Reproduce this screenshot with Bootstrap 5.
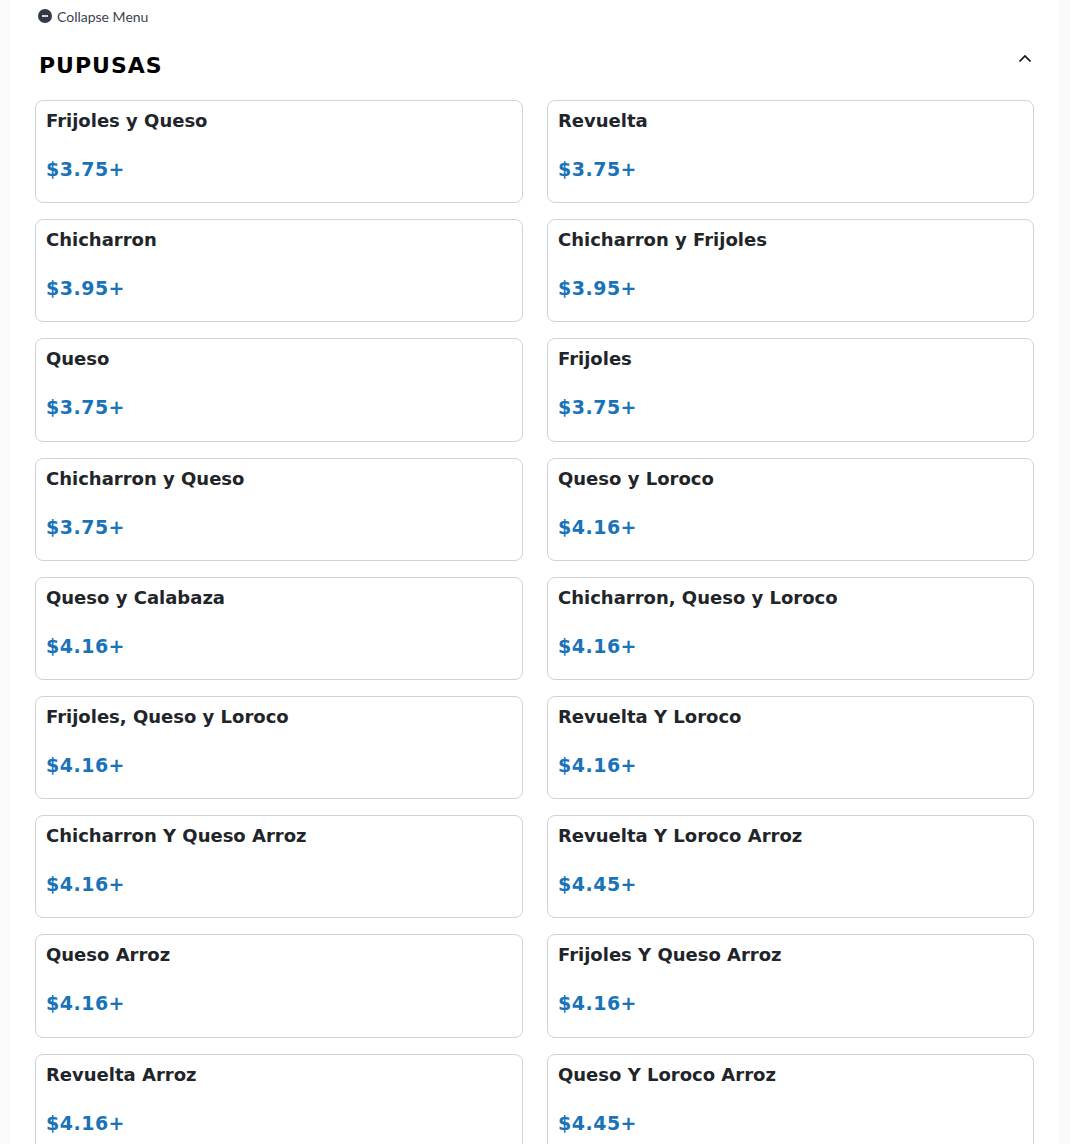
<!DOCTYPE html>
<html lang="en"><head><meta charset="utf-8"><title>Menu</title>
<link href="https://cdn.jsdelivr.net/npm/bootstrap@5.3.0/dist/css/bootstrap.min.css" rel="stylesheet">
<style>
html,body{background:#fafafa;overflow:hidden}
.sheet{background:#fff;width:1049px;margin-left:10px;height:1144px;overflow:hidden;padding:0 25px}
.collapse-link{font-family:"Lato","Noto Sans",sans-serif;font-size:14px;color:#3c4350;height:32px;padding-left:3px;gap:5px}
.sec-head{height:68px;padding-left:4px;padding-right:0}
.sec-title{font-family:"DejaVu Sans",sans-serif;font-weight:700;font-size:22px;letter-spacing:1px;color:#000;margin:0;line-height:1;padding-top:23px}
.sec-chev{margin:18px 1px 0 0}
.item-grid{display:grid;grid-template-columns:488px 487px;column-gap:24px;row-gap:16px}
.item-box{height:103.2px;border:1px solid #ced4da;border-radius:8px;padding:9px 10px 0;font-family:"DejaVu Sans",sans-serif;font-weight:700}
.item-name{font-size:18px;line-height:21px;color:#212529;margin:0}
.item-price{font-size:19px;line-height:22px;color:#1a73b8;margin-top:27px;letter-spacing:.5px}
</style></head><body>
<div class="sheet">
<div class="collapse-link d-flex align-items-center">
<svg width="14" height="14" viewBox="0 0 14 14"><circle cx="7" cy="7" r="7" fill="#343a46"/><rect x="4" y="6.2" width="6" height="1.6" fill="#fff"/></svg>
<span>Collapse Menu</span></div>
<div class="sec-head d-flex justify-content-between align-items-start">
<h2 class="sec-title">PUPUSAS</h2>
<svg class="sec-chev" width="16" height="16" viewBox="0 0 16 16"><path d="M2.5 11.5 8 6l5.500 5.500" fill="none" stroke="#111" stroke-width="1.700"/></svg>
</div>
<div class="item-grid">
<div class="item-box"><p class="item-name">Frijoles y Queso</p><div class="item-price">$3.75+</div></div>
<div class="item-box"><p class="item-name">Revuelta</p><div class="item-price">$3.75+</div></div>
<div class="item-box"><p class="item-name">Chicharron</p><div class="item-price">$3.95+</div></div>
<div class="item-box"><p class="item-name">Chicharron y Frijoles</p><div class="item-price">$3.95+</div></div>
<div class="item-box"><p class="item-name">Queso</p><div class="item-price">$3.75+</div></div>
<div class="item-box"><p class="item-name">Frijoles</p><div class="item-price">$3.75+</div></div>
<div class="item-box"><p class="item-name">Chicharron y Queso</p><div class="item-price">$3.75+</div></div>
<div class="item-box"><p class="item-name">Queso y Loroco</p><div class="item-price">$4.16+</div></div>
<div class="item-box"><p class="item-name">Queso y Calabaza</p><div class="item-price">$4.16+</div></div>
<div class="item-box"><p class="item-name">Chicharron, Queso y Loroco</p><div class="item-price">$4.16+</div></div>
<div class="item-box"><p class="item-name">Frijoles, Queso y Loroco</p><div class="item-price">$4.16+</div></div>
<div class="item-box"><p class="item-name">Revuelta Y Loroco</p><div class="item-price">$4.16+</div></div>
<div class="item-box"><p class="item-name">Chicharron Y Queso Arroz</p><div class="item-price">$4.16+</div></div>
<div class="item-box"><p class="item-name">Revuelta Y Loroco Arroz</p><div class="item-price">$4.45+</div></div>
<div class="item-box"><p class="item-name">Queso Arroz</p><div class="item-price">$4.16+</div></div>
<div class="item-box"><p class="item-name">Frijoles Y Queso Arroz</p><div class="item-price">$4.16+</div></div>
<div class="item-box"><p class="item-name">Revuelta Arroz</p><div class="item-price">$4.16+</div></div>
<div class="item-box"><p class="item-name">Queso Y Loroco Arroz</p><div class="item-price">$4.45+</div></div>
</div>
</div>
<script src="https://cdn.jsdelivr.net/npm/bootstrap@5.3.0/dist/js/bootstrap.bundle.min.js"></script>
</body></html>
